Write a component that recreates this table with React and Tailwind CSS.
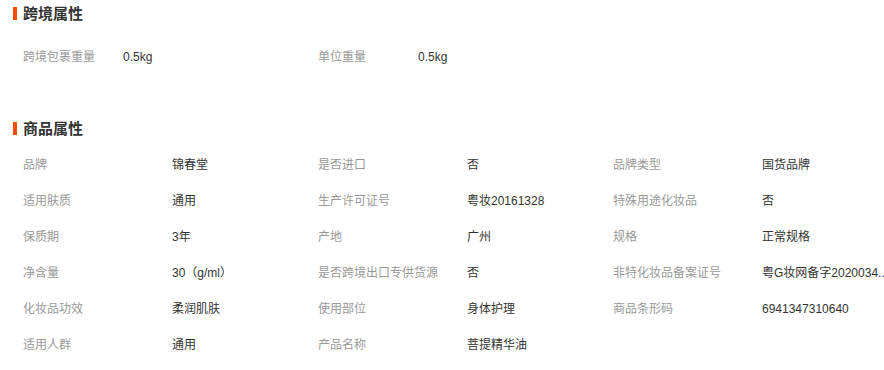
const FONT = 'font-["Liberation_Sans","Noto_Sans_CJK_SC",sans-serif]'

const crossBorder = [
  ['跨境包裹重量', '0.5kg'],
  ['单位重量', '0.5kg'],
]

const goods = [
  ['品牌', '锦春堂'],
  ['是否进口', '否'],
  ['品牌类型', '国货品牌'],
  ['适用肤质', '通用'],
  ['生产许可证号', '粤妆20161328'],
  ['特殊用途化妆品', '否'],
  ['保质期', '3年'],
  ['产地', '广州'],
  ['规格', '正常规格'],
  ['净含量', '30（g/ml）'],
  ['是否跨境出口专供货源', '否'],
  ['非特化妆品备案证号', '粤G妆网备字2020034..'],
  ['化妆品功效', '柔润肌肤'],
  ['使用部位', '身体护理'],
  ['商品条形码', '6941347310640'],
  ['适用人群', '通用'],
  ['产品名称', '菩提精华油'],
]

function Title({ children }) {
  return (
    <div className="flex items-center h-[26px] pl-[13px]">
      <span className="w-[4px] h-[13px] bg-[#ff4a00] mr-[6px]" />
      <h2 className="text-[15px] font-bold text-[#333] leading-none">{children}</h2>
    </div>
  )
}

function Item({ label, value, labelW }) {
  return (
    <div className="flex items-center h-9 w-[295px] text-xs">
      <span className={`${labelW} shrink-0 text-[#999] whitespace-nowrap`}>{label}</span>
      <span className="whitespace-nowrap text-[#333]">{value}</span>
    </div>
  )
}

export default function App() {
  return (
    <div className={`${FONT} w-full h-[370px] bg-white overflow-hidden`}>
      <Title>跨境属性</Title>
      <div className="mt-[13px] pl-[23px] flex">
        {crossBorder.map(([l, v]) => (
          <Item key={l} label={l} value={v} labelW="w-[100px]" />
        ))}
      </div>

      <div className="mt-[40px]">
        <Title>商品属性</Title>
      </div>
      <div className="mt-[6px] pl-[23px] grid grid-cols-[295px_295px_250px]">
        {goods.map(([l, v]) => (
          <Item key={l} label={l} value={v} labelW="w-[149px]" />
        ))}
      </div>
    </div>
  )
}
